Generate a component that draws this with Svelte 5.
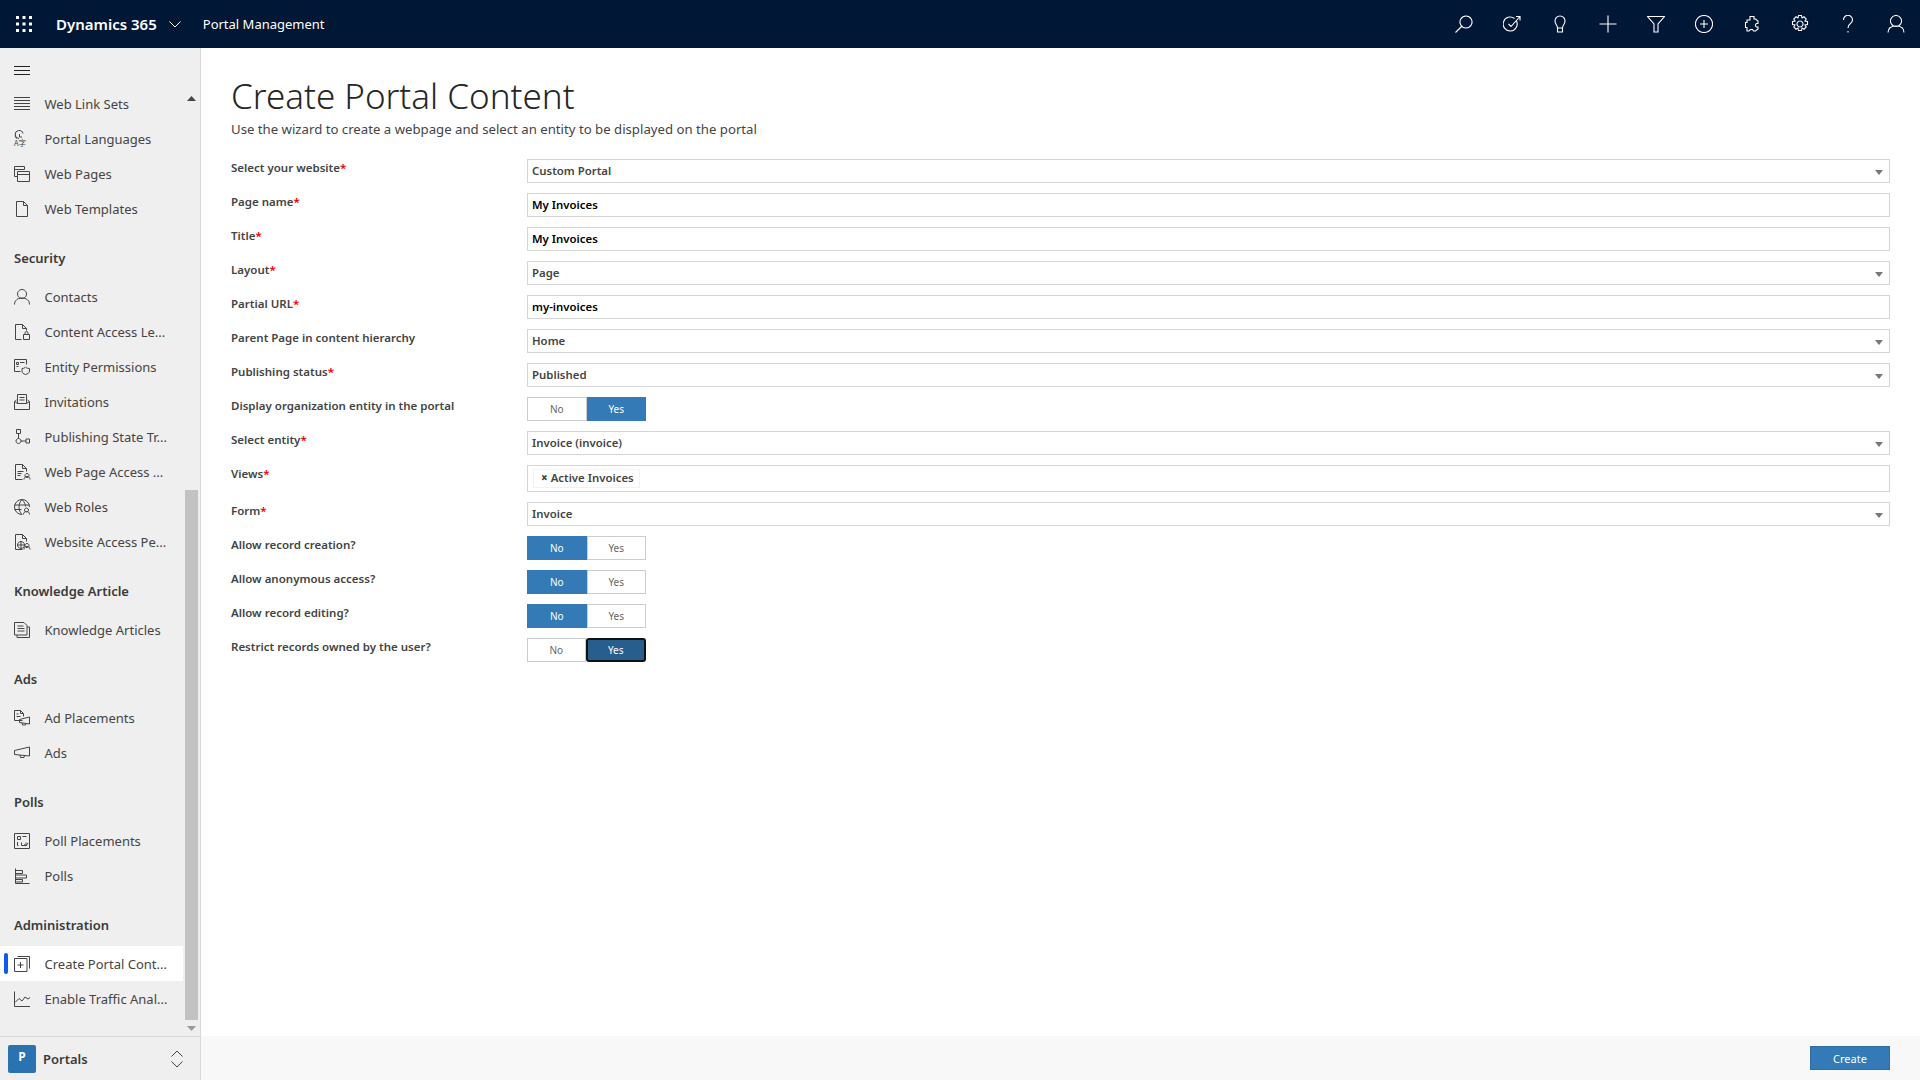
<script lang="ts">
	const icons: Record<string, string> = {
		lines: 'M0 1.5h16M0 4.5h16M0 7.5h16M0 10.5h16M0 13.5h16',
		lang: 'M5 7.500a4 4 0 1 1 4-5M1.500 3.500a4 4 0 0 0 1 4M5.500 3v3h2.500',
		pages: 'M.5 .5h10v3M.5 .5v10h3M.5 3.500h10M3.500 5.500h12v10h-12zM3.500 8.500h12',
		template: 'M2.500 .5h7l4 4v11h-11zM9.500 .5v4h4',
		person: 'M8 .5a4.500 4.500 0 1 0 .01 0M.5 15.500c0-4 3-6.500 7.500-6.500s7.500 2.500 7.500 6.500',
		doclock: 'M7.500 15.500h-6v-15h7l4 4v2M8.500 .5v4h4M9.500 10.500h6v5h-6zM11 10.500v-1.500a1.500 1.500 0 0 1 3 0v1.500',
		shield: 'M6.500 12.500h-6v-12h12v5M2.500 3.500h2v2h-2zM6 3.500h4.500M2.500 7.500h2M8 9.500c2.500 0 3.500-1.500 3.500-1.500s1 1.500 4 1.500v2.500c0 2-2 3-4 3.500-2-.5-3.500-1.500-3.500-3.500z',
		invite: 'M.5 7.500v8h15v-8l-2-1.500M.5 7.500l2-1.500M3.500 9.500v-9h9v9M5.500 3.500h5M5.500 6h5M.5 7.500l3 2h9l3-2',
		flow: 'M2.500 .5h4v4h-4zM4.500 4.500v5M4.500 9.500a2.500 2.500 0 1 0 .01 0M7 12h5M12 10h3.500v4h-3.500z',
		docperson: 'M8.500 15.500h-7v-15h7l4 4v3M8.500 .5v4h4M3.500 7.500h6M3.500 9.500h4M3.500 11.500h3M13 9.500a2 2 0 1 0 .01 0M10 15.500c0-2 1.200-3 3-3s3 1 3 3',
		globe: 'M8 15.500a7.500 7.500 0 1 1 7.500-7.500M8 .5c-4 4-4 11 0 15M8 .5c2.500 2.500 3.500 5 3.500 7M.5 6h15M.5 10.500h7M12.500 9a2 2 0 1 0 .01 0M9.500 15.500c0-2 1.200-3 3-3s3 1 3 3',
		docglobe: 'M8.500 15.500h-7v-15h7l4 4v3M8.500 .5v4h4M7 7.500a3.500 3.500 0 1 0 .01 0M3.500 11h7M7 7.500v7M13 9.500a2 2 0 1 0 .01 0M10 15.500c0-2 1.200-3 3-3s3 1 3 3',
		article: 'M.5 .5h9.500l3 3v9.500h-12.500zM3 13v2.500h12.500v-10.500h-2.500M3.500 4h6M3.500 6.500h7M3.500 9h7',
		adplace: 'M8.500 10.500h-8v-10h6l3 3v3M6.500 .5v3h3M2.500 4h2M2.500 6.500h4M5.500 9.500l10-2.500v7l-10-1.500zM8 13l.5 2h3l.5-1.500',
		ads: 'M.5 5.500l15-3.500v9l-15-1.500zM6 10l.5 2.500h3.500l.5-2',
		poll: 'M.5 .5h15v15h-15zM3.500 3.500h3v3h-3zM8.500 3.500h4M3.500 9v3.500h1M7.500 9.500v3h4.500v-3M10 11.500l2 1.500 2-3',
		polls: 'M1.500 .5v15h14M1.500 2.500h7v3h-7zM1.500 7h11v3h-11zM1.500 11.500h7v2.500h-7z',
		create: 'M3.500 .5h12v12M.5 2.500h12.500v13h-12.500zM6.500 6v6M3.500 9h6',
		chart: 'M.5 .5v15h15.500M1 11.500l4-4 3 2.500 3-4 3 2 2-1.500'
	};

	const sections = [
		{ title: '', items: [['lines', 'Web Link Sets'], ['lang', 'Portal Languages'], ['pages', 'Web Pages'], ['template', 'Web Templates']] },
		{ title: 'Security', items: [['person', 'Contacts'], ['doclock', 'Content Access Le...'], ['shield', 'Entity Permissions'], ['invite', 'Invitations'], ['flow', 'Publishing State Tr...'], ['docperson', 'Web Page Access ...'], ['globe', 'Web Roles'], ['docglobe', 'Website Access Pe...']] },
		{ title: 'Knowledge Article', items: [['article', 'Knowledge Articles']] },
		{ title: 'Ads', items: [['adplace', 'Ad Placements'], ['ads', 'Ads']] },
		{ title: 'Polls', items: [['poll', 'Poll Placements'], ['polls', 'Polls']] },
		{ title: 'Administration', items: [['create', 'Create Portal Cont...'], ['chart', 'Enable Traffic Anal...']] }
	];

	const rows = [
		{ label: 'Select your website', req: true, kind: 'select', value: 'Custom Portal' },
		{ label: 'Page name', req: true, kind: 'input', value: 'My Invoices' },
		{ label: 'Title', req: true, kind: 'input', value: 'My Invoices' },
		{ label: 'Layout', req: true, kind: 'select', value: 'Page' },
		{ label: 'Partial URL', req: true, kind: 'input', value: 'my-invoices' },
		{ label: 'Parent Page in content hierarchy', req: false, kind: 'select', value: 'Home' },
		{ label: 'Publishing status', req: true, kind: 'select', value: 'Published' },
		{ label: 'Display organization entity in the portal', req: false, kind: 'toggle', value: 'Yes' },
		{ label: 'Select entity', req: true, kind: 'select', value: 'Invoice (invoice)' },
		{ label: 'Views', req: true, kind: 'tags', value: 'Active Invoices' },
		{ label: 'Form', req: true, kind: 'select', value: 'Invoice' },
		{ label: 'Allow record creation?', req: false, kind: 'toggle', value: 'No' },
		{ label: 'Allow anonymous access?', req: false, kind: 'toggle', value: 'No' },
		{ label: 'Allow record editing?', req: false, kind: 'toggle', value: 'No' },
		{ label: 'Restrict records owned by the user?', req: false, kind: 'toggle', value: 'Yes', focus: true }
	];
</script>

<div class="app">
	<header class="topbar">
		<svg class="waffle" width="16" height="16" viewBox="0 0 16 16" fill="#fff">
			{#each [0, 6.5, 13] as y}
				{#each [0, 6.5, 13] as x}
					<rect {x} {y} width="3" height="3" />
				{/each}
			{/each}
		</svg>
		<span class="brand">Dynamics 365</span>
		<svg class="brand-chev" width="12" height="7" viewBox="0 0 12 7"><path d="M.5 .5l5.500 5.500 5.500-5.500" /></svg>
		<span class="appname">Portal Management</span>
		<div class="tools">
			<svg viewBox="0 0 18 18"><path d="M11 1a6 6 0 1 0 .01 0M6.500 11.500l-6 6" /></svg>
			<svg viewBox="0 0 18 18"><path d="M13.500 6a7 7 0 1 1-2-2.500M5.500 9l2.500 2.500 9-10M13 1.500h4v4" /></svg>
			<svg viewBox="0 0 18 18"><path d="M6.500 13c0-3-2.500-3.500-2.500-7a5 5 0 0 1 10 0c0 3.500-2.500 4-2.500 7zM6.500 13v4h5v-4" /></svg>
			<svg viewBox="0 0 18 18"><path d="M9 .5v17M.5 9h17" /></svg>
			<svg viewBox="0 0 18 18"><path d="M.5 1.500h17l-6.500 7.500v8h-4v-8z" /></svg>
			<svg viewBox="0 0 18 18"><path d="M9 .5a8.500 8.500 0 1 0 .01 0M9 5v8M5 9h8" /></svg>
			<svg viewBox="0 0 18 18"><path d="M7 1.500h4v2.500h1.500l2.500 2v2.500h-1.500a2 2 0 0 0 0 3.500h1.500v2l-2.500 2h-2l-1-1.500h-2l-1.500 1.500h-2v-3.500h-1.500v-5h1.500v-2.500h3z" /></svg>
			<svg viewBox="0 0 18 18"><path d="M9 6a3 3 0 1 0 .01 0M7.500 .5h3l.5 2.500 2-1.200 2.200 2.200-1.200 2 2.500.5v3l-2.500.5 1.200 2-2.200 2.200-2-1.200-.5 2.500h-3l-.5-2.500-2 1.200-2.200-2.200 1.200-2-2.500-.5v-3l2.500-.5-1.200-2 2.200-2.200 2 1.200z" /></svg>
			<svg viewBox="0 0 18 18"><path d="M4.500 5a4.500 4.500 0 1 1 7 3.500c-1.500 1-2.500 2-2.500 4.500M9 16v1.500" /></svg>
			<svg viewBox="0 0 18 18"><path d="M9 .5a5.500 5.500 0 1 0 .01 0M1 17.500c0-4.500 3.500-6.500 8-6.500s8 2 8 6.500" /></svg>
		</div>
	</header>

	<div class="body">
		<aside class="sidebar">
			<div class="burger">
				<svg width="16" height="10" viewBox="0 0 16 10"><path d="M0 .5h16M0 4.500h16M0 8.500h16" /></svg>
			</div>
			<div class="nav-wrap">
				<nav class="nav">
					{#each sections as section}
						<div class="group">
							{#if section.title}
								<h3>{section.title}</h3>
							{/if}
							{#each section.items as item}
								<div class="item" class:active={item[1].startsWith('Create')}>
									<svg class="ico" width="16" height="16" viewBox="0 0 16 16">
										<path d={icons[item[0]]} />
										{#if item[0] === 'lang'}
											<text x="0" y="15" class="ico-text">A字</text>
										{/if}
									</svg>
									<span>{item[1]}</span>
								</div>
							{/each}
						</div>
					{/each}
				</nav>
				<div class="scrollbar">
					<svg class="arrow" width="9" height="5" viewBox="0 0 9 5"><path d="M4.500 0l4.500 5h-9z" /></svg>
					<div class="thumb"></div>
					<svg class="arrow down" width="9" height="5" viewBox="0 0 9 5"><path d="M0 0h9l-4.500 5z" /></svg>
				</div>
			</div>
			<div class="area">
				<span class="tile">P</span>
				<span class="area-name">Portals</span>
				<svg width="12" height="18" viewBox="0 0 12 18"><path d="M.5 6.500l5.500-5.500 5.500 5.500M.5 11.500l5.500 5.500 5.500-5.500" /></svg>
			</div>
		</aside>

		<main class="main">
			<div class="content">
				<h1>Create Portal Content</h1>
				<p class="sub">Use the wizard to create a webpage and select an entity to be displayed on the portal</p>
				<div class="form">
					{#each rows as row}
						<div class="label">{row.label}{#if row.req}<span class="req">*</span>{/if}</div>
						{#if row.kind === 'select'}
							<div class="field">
								<span>{row.value}</span>
								<svg class="caret" width="8" height="5" viewBox="0 0 8 5"><path d="M0 0h8l-4 5z" /></svg>
							</div>
						{:else if row.kind === 'input'}
							<div class="field strong"><span>{row.value}</span></div>
						{:else if row.kind === 'tags'}
							<div class="field tags"><span class="chip"><b>×</b> {row.value}</span></div>
						{:else}
							<div class="toggle">
								<span class="opt" class:on={row.value === 'No'}>No</span>
								<span class="opt" class:on={row.value === 'Yes'} class:focus={row.focus}>Yes</span>
							</div>
						{/if}
					{/each}
				</div>
			</div>
			<footer class="footer">
				<button class="create">Create</button>
			</footer>
		</main>
	</div>
</div>

<style>
	:global(body) {
		margin: 0;
		background: #fff;
	}

	.app {
		width: 1920px;
		height: 1080px;
		display: flex;
		flex-direction: column;
		overflow: hidden;
		font-family: 'Noto Sans', 'Open Sans', sans-serif;
		color: #444;
	}

	.topbar {
		flex: 0 0 48px;
		display: flex;
		align-items: center;
		background: #001736;
		color: #fff;
	}

	.waffle {
		margin-left: 16px;
	}

	.brand {
		margin-left: 24px;
		font-size: 15px;
		font-weight: 600;
	}

	.brand-chev {
		margin-left: 12px;
		fill: none;
		stroke: #fff;
	}

	.appname {
		margin-left: 22px;
		font-size: 13px;
	}

	.tools {
		margin-left: auto;
		display: flex;
	}

	.tools svg {
		width: 18px;
		height: 18px;
		padding: 15px;
		fill: none;
		stroke: #fff;
		stroke-width: 1.1;
	}

	.body {
		flex: 1;
		display: flex;
		min-height: 0;
	}

	.sidebar {
		flex: 0 0 200px;
		display: flex;
		flex-direction: column;
		background: #efefef;
		border-right: 1px solid #d8d8d8;
	}

	.burger {
		flex: 0 0 38px;
		display: flex;
		align-items: center;
		padding: 7px 0 0 14px;
		box-sizing: border-box;
	}

	.burger svg {
		fill: none;
		stroke: #222;
	}

	.nav-wrap {
		flex: 1;
		display: flex;
		min-height: 0;
	}

	.nav {
		flex: 0 0 183px;
		overflow: hidden;
	}

	.group + .group {
		margin-top: 17px;
	}

	h3 {
		margin: 0;
		height: 36px;
		padding: 5px 0 0 14px;
		box-sizing: border-box;
		font-size: 13px;
		line-height: 20px;
		font-weight: 600;
		color: #3a3a3a;
	}

	.item {
		position: relative;
		height: 35px;
		display: flex;
		align-items: center;
		padding-left: 14px;
		font-size: 13px;
		white-space: nowrap;
		color: #444;
	}

	.item.active {
		background: #fff;
	}

	.item.active::before {
		content: '';
		position: absolute;
		left: 4px;
		top: 7px;
		width: 4px;
		height: 21px;
		border-radius: 2px;
		background: #0a5cf0;
	}

	.ico {
		flex: none;
		margin-right: 14.500px;
		fill: none;
		stroke: #444;
		stroke-width: 1;
		overflow: visible;
	}

	.ico-text {
		font-size: 7.500px;
		font-family: 'Noto Sans CJK SC', sans-serif;
		fill: #444;
		stroke: none;
	}

	.scrollbar {
		flex: 1;
		display: flex;
		flex-direction: column;
		align-items: center;
		padding: 10px 2px 0;
	}

	.arrow {
		fill: #444;
		flex: none;
	}

	.arrow.down {
		fill: #999;
		margin-top: 6px;
		margin-bottom: 6px;
	}

	.thumb {
		margin-top: auto;
		width: 13px;
		height: 530px;
		background: #c2c2c2;
		flex: none;
	}

	.area {
		flex: 0 0 44px;
		box-sizing: border-box;
		display: flex;
		align-items: center;
		padding: 0 17px 0 8px;
		border-top: 1px solid #d8d8d8;
		margin-top: -1px;
		height: 44px;
	}

	.tile {
		width: 28px;
		height: 28px;
		border-radius: 2px;
		background: #2a72b0;
		color: #fff;
		font-size: 12px;
		font-weight: 700;
		display: flex;
		align-items: center;
		justify-content: center;
		padding-bottom: 4px;
		box-sizing: border-box;
	}

	.area-name {
		margin-left: 7px;
		font-size: 13px;
		font-weight: 600;
		flex: 1;
		color: #3a3a3a;
	}

	.area svg {
		fill: none;
		stroke: #444;
	}

	.main {
		flex: 1;
		display: flex;
		flex-direction: column;
		min-width: 0;
	}

	.content {
		flex: 1;
		padding: 24px 30px 0 30px;
	}

	h1 {
		margin: 0;
		font-size: 35px;
		line-height: 47px;
		font-weight: 300;
		color: #262626;
	}

	.sub {
		margin: 0 0 20px;
		font-size: 13.2px;
		line-height: 20px;
		color: #444;
	}

	.form {
		display: grid;
		grid-template-columns: 296px 1fr;
		row-gap: 10px;
		align-items: start;
	}

	.label {
		font-size: 11.500px;
		line-height: 18px;
		font-weight: 600;
		color: #444;
	}

	.req {
		color: #e00;
	}

	.field {
		position: relative;
		height: 24px;
		box-sizing: border-box;
		border: 1px solid #d5d5d5;
		padding: 0 4px 2px;
		display: flex;
		align-items: center;
		font-size: 11.4px;
		font-weight: 600;
		color: #444;
	}

	.field.strong {
		color: #000;
	}

	.field.tags {
		height: 27px;
		padding: 0 5px;
	}

	.chip {
		height: 19px;
		line-height: 16px;
		box-sizing: border-box;
		border: 1px solid #f2f2f2;
		padding: 0 5px 0 7px;
	}

	.caret {
		position: absolute;
		right: 6px;
		top: 10px;
		fill: #777;
	}

	.toggle {
		display: flex;
		width: 119px;
		height: 24px;
		font-size: 10px;
	}

	.opt {
		flex: 1;
		display: flex;
		align-items: center;
		justify-content: center;
		box-sizing: border-box;
		border: 1px solid #ccc;
		padding-bottom: 1px;
		color: #666;
		background: #fff;
	}

	.opt.on {
		background: #337ab7;
		border-color: #337ab7;
		color: #fff;
	}

	.opt.focus {
		background: #285e8e;
		border: 2px solid #111;
		border-radius: 3px;
	}

	.footer {
		flex: 0 0 44px;
		height: 44px;
		box-sizing: border-box;
		background: #f8f8f8;
		display: flex;
		align-items: center;
		justify-content: flex-end;
		padding-right: 30px;
	}

	.create {
		width: 80px;
		height: 24px;
		border: 1px solid #2e6da4;
		background: #337ab7;
		color: #fff;
		font: 11px 'Noto Sans', sans-serif;
	}
</style>
